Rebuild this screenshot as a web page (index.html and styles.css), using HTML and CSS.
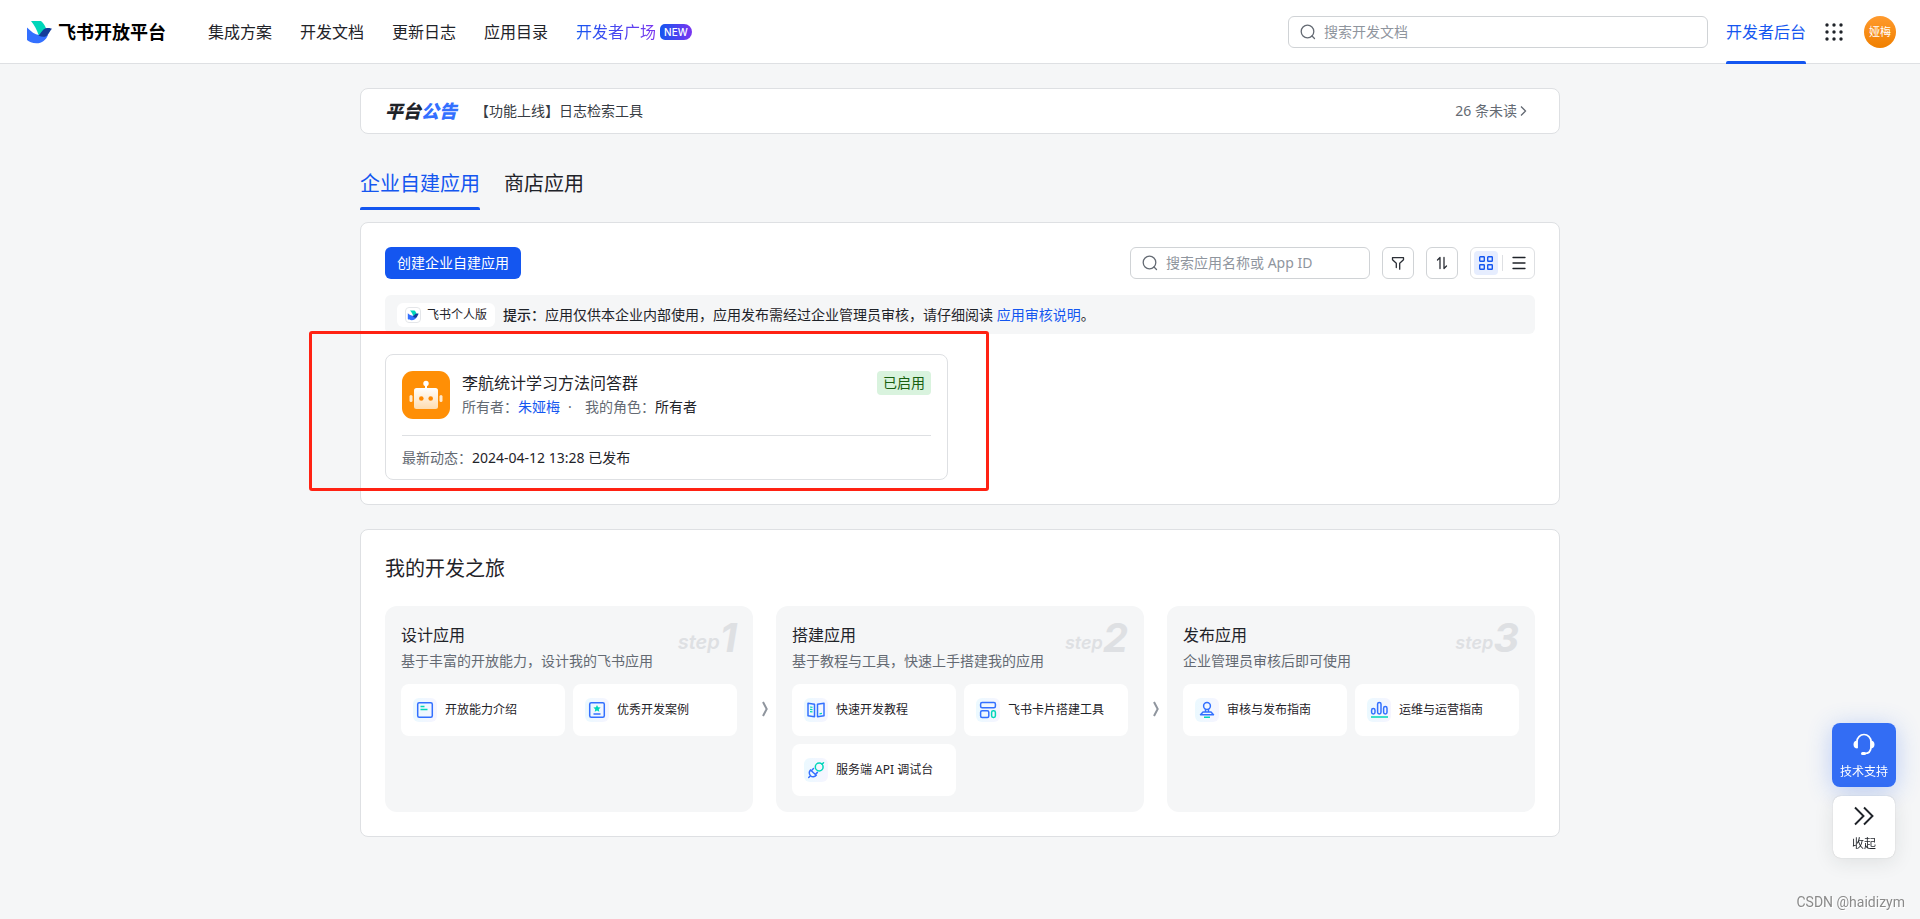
FILE: index.html
```html
<!DOCTYPE html>
<html lang="zh-CN">
<head>
<meta charset="utf-8">
<title>飞书开放平台</title>
<link rel="stylesheet" href="styles.css">
</head>
<body>
<header class="topbar">
  <a class="brand" href="#">
    <svg width="26" height="24" viewBox="0 0 26 24" aria-hidden="true">
      <path d="M5 1h10c2.600 2.200 4.300 5 5.200 8L13 16C11 10 8.400 5 5 1z" fill="#00d6b9"/>
      <path d="M1 7.500c4 4.200 8 7 12 7.500h9c-2 5-6 8.300-11.500 8.300C6 23.300 3.200 21.600 1 20z" fill="#3370ff"/>
      <path d="M12.500 15.500c3-2.500 4.300-7.200 8.500-7.500 1.600 0 3.200.1 5 .7-2.600 2.300-3 6-6 7.500-2.200 1-5 .5-7.500-.7z" fill="#133c9a"/>
    </svg>
    <span class="brand-name">飞书开放平台</span>
  </a>
  <nav class="nav">
    <a href="#">集成方案</a>
    <a href="#">开发文档</a>
    <a href="#">更新日志</a>
    <a href="#">应用目录</a>
    <a class="nav-hot" href="#"><span class="nav-hot-text">开发者广场</span><span class="badge-new">NEW</span></a>
  </nav>
  <div class="top-right">
    <label class="search search-docs">
      <svg width="16" height="16" viewBox="0 0 16 16" fill="none" stroke="#646a73" stroke-width="1.300" stroke-linecap="round" aria-hidden="true"><circle cx="7.500" cy="7.500" r="6.300"/><path d="M12 12l2.500 2.500"/></svg>
      <input type="text" placeholder="搜索开发文档" aria-label="搜索开发文档">
    </label>
    <a class="console-link" href="#">开发者后台</a>
    <button class="icon-plain" aria-label="应用列表">
      <svg width="18" height="18" viewBox="0 0 18 18" fill="#1f2329" aria-hidden="true"><circle cx="2" cy="2" r="1.700"/><circle cx="9" cy="2" r="1.700"/><circle cx="16" cy="2" r="1.700"/><circle cx="2" cy="9" r="1.700"/><circle cx="9" cy="9" r="1.700"/><circle cx="16" cy="9" r="1.700"/><circle cx="2" cy="16" r="1.700"/><circle cx="9" cy="16" r="1.700"/><circle cx="16" cy="16" r="1.700"/></svg>
    </button>
    <button class="avatar">娅梅</button>
  </div>
</header>

<main class="page">
  <section class="notice-bar">
    <h2 class="notice-title">平台<em>公告</em></h2>
    <a class="notice-text" href="#">【功能上线】日志检索工具</a>
    <a class="notice-more" href="#">26 条未读<svg width="12" height="12" viewBox="0 0 12 12" fill="none" stroke="#646a73" stroke-width="1.300" aria-hidden="true"><path d="M4 1.500L8.500 6 4 10.500"/></svg></a>
  </section>

  <nav class="tabs">
    <a class="tab tab-active" href="#">企业自建应用</a>
    <a class="tab" href="#">商店应用</a>
  </nav>

  <section class="panel apps">
    <div class="toolbar">
      <button class="btn-primary">创建企业自建应用</button>
      <div class="tools">
        <label class="search search-apps">
          <svg width="16" height="16" viewBox="0 0 16 16" fill="none" stroke="#646a73" stroke-width="1.300" stroke-linecap="round" aria-hidden="true"><circle cx="7.500" cy="7.500" r="6.300"/><path d="M12 12l2.500 2.500"/></svg>
          <input type="text" placeholder="搜索应用名称或 App ID" aria-label="搜索应用名称或 App ID">
        </label>
        <button class="tool" aria-label="筛选">
          <svg width="14" height="14" viewBox="0 0 14 14" fill="none" stroke="#2b2f36" stroke-width="1.300" stroke-linejoin="round" stroke-linecap="round" aria-hidden="true"><path d="M5.300 11.500V7.200L1.500 3.800V1.700h11v2.100L8.700 7.200v6"/></svg>
        </button>
        <button class="tool" aria-label="排序">
          <svg width="14" height="14" viewBox="0 0 14 14" fill="none" stroke="#2b2f36" stroke-width="1.300" stroke-linejoin="round" stroke-linecap="round" aria-hidden="true"><path d="M2.500 4l2.500-2.500v11M9 1.500v11l2.500-2.500"/></svg>
        </button>
        <div class="view-toggle">
          <button class="view view-on" aria-label="卡片视图">
            <svg width="14" height="14" viewBox="0 0 14 14" fill="none" stroke="#1456f0" stroke-width="1.400" aria-hidden="true"><rect x=".7" y=".7" width="4.600" height="4.600" rx=".6"/><rect x="8.700" y=".7" width="4.600" height="4.600" rx=".6"/><rect x=".7" y="8.700" width="4.600" height="4.600" rx=".6"/><rect x="8.700" y="8.700" width="4.600" height="4.600" rx=".6"/></svg>
          </button>
          <span class="view-sep"></span>
          <button class="view" aria-label="列表视图">
            <svg width="14" height="14" viewBox="0 0 14 14" stroke="#1f2329" stroke-width="1.300" stroke-linecap="round" aria-hidden="true"><path d="M1 1.500h12M1 7h12M1 12.500h12"/></svg>
          </button>
        </div>
      </div>
    </div>

    <div class="tip">
      <span class="tenant">
        <svg width="16" height="16" viewBox="0 0 16 16" aria-hidden="true"><rect x=".5" y=".5" width="15" height="15" rx="3.500" fill="#fff" stroke="#e4e6e9"/><path d="M5 3.500h4.500c1.200 1 1.800 2.300 2.100 3.500L8.500 9.500C7.700 7 6.600 5.200 5 3.500z" fill="#00d6b9"/><path d="M2.800 6.300c2.500 2.300 5 3 9.200 3-.8 2.500-3 3.900-5.400 3.900-1.500 0-2.900-.4-3.800-1.200z" fill="#3370ff"/><path d="M8 9.400c1.200-1 2-3 4-3 .7 0 1.200.1 1.700.4-1 .9-1.300 3.500-2.700 4-1 .2-2-.4-3-1.400z" fill="#133c9a"/></svg>
        飞书个人版
      </span>
      <p class="tip-text"><strong>提示：</strong>应用仅供本企业内部使用，应用发布需经过企业管理员审核，请仔细阅读 <a href="#">应用审核说明</a>。</p>
    </div>

    <div class="app-grid">
      <article class="app-card">
        <div class="app-head">
          <svg class="app-icon" width="48" height="48" viewBox="0 0 48 48" aria-hidden="true">
            <defs>
              <linearGradient id="bot" x1="0" y1="0" x2="0" y2="1"><stop offset="0" stop-color="#fff"/><stop offset="1" stop-color="#ffdcae"/></linearGradient>
            </defs>
            <rect width="48" height="48" rx="11" fill="#ff8f06"/>
            <circle cx="24" cy="12.500" r="2.700" fill="#fff"/><path d="M23 13h2v6h-2z" fill="#fff"/>
            <rect x="12" y="17" width="24" height="21" rx="2.500" fill="url(#bot)"/>
            <rect x="7.500" y="24" width="3" height="7" rx="1.500" fill="#ffe9cd"/><rect x="37.500" y="24" width="3" height="7" rx="1.500" fill="#ffe9cd"/>
            <circle cx="19.300" cy="27.500" r="2.300" fill="#ff8800"/><circle cx="28.700" cy="27.500" r="2.300" fill="#ff8800"/>
          </svg>
          <div class="app-info">
            <h3 class="app-name">李航统计学习方法问答群</h3>
            <p class="app-meta"><span>所有者：<a href="#">朱娅梅</a></span><span class="dot">·</span><span>我的角色：<b>所有者</b></span></p>
          </div>
          <span class="status">已启用</span>
        </div>
        <p class="app-foot">最新动态：<b>2024-04-12 13:28 已发布</b></p>
      </article>
    </div>
    <div class="highlight"></div>
  </section>

  <section class="panel journey">
    <h2 class="journey-title">我的开发之旅</h2>
    <div class="steps">
      <div class="step">
        <div class="step-no step-no-first">step<b>1</b></div>
        <h3>设计应用</h3>
        <p>基于丰富的开放能力，设计我的飞书应用</p>
        <div class="tiles">
          <a class="tile" href="#"><svg class="tile-icon" viewBox="0 0 24 24" fill="none" stroke="#3370ff" stroke-width="1.500" aria-hidden="true"><rect x="4.700" y="4.700" width="14.600" height="14.600" rx="1.500"/><path d="M7.500 8.500h4M7.500 11.500h7" stroke="#00d6b9"/></svg>开放能力介绍</a>
          <a class="tile" href="#"><svg class="tile-icon" viewBox="0 0 24 24" fill="none" stroke="#3370ff" stroke-width="1.500" aria-hidden="true"><rect x="4.700" y="4.700" width="14.600" height="14.600" rx="1.500"/><path d="M8.500 16h7"/><path d="M12 6.900l1.100 2.300 2.500.3-1.800 1.700.5 2.500-2.300-1.200-2.300 1.200.5-2.500-1.800-1.700 2.500-.3z" fill="#00d6b9" stroke="none"/></svg>优秀开发案例</a>
        </div>
      </div>
      <svg class="step-arrow" viewBox="0 0 8 16" aria-hidden="true"><path d="M2 1l3.700 7L2 15" fill="none" stroke="#8f959e" stroke-width="2"/></svg>
      <div class="step">
        <div class="step-no">step<b>2</b></div>
        <h3>搭建应用</h3>
        <p>基于教程与工具，快速上手搭建我的应用</p>
        <div class="tiles">
          <a class="tile" href="#"><svg class="tile-icon" viewBox="0 0 24 24" fill="none" stroke="#3370ff" stroke-width="1.500" stroke-linejoin="round" aria-hidden="true"><path d="M4 5.200l6.500 1v12.600L4 17.800zM20 5.200l-6.500 1v12.600l6.500-1z"/><path d="M6 9l2.500.4M6 11.300l2.500.3M6 13.600l2.500.3M15.500 15.800l2.500-.4" stroke="#00d6b9" stroke-width="1.200"/></svg>快速开发教程</a>
          <a class="tile" href="#"><svg class="tile-icon" viewBox="0 0 24 24" fill="none" stroke="#3370ff" stroke-width="1.500" aria-hidden="true"><rect x="4.600" y="4.600" width="14.800" height="5.200" rx="1.500"/><rect x="4.600" y="12.800" width="8.200" height="6.600" rx="1.500"/><rect x="15.600" y="12.800" width="3.800" height="6.600" rx="1.700" stroke="#00d6b9"/></svg>飞书卡片搭建工具</a>
          <a class="tile" href="#"><svg class="tile-icon" viewBox="0 0 24 24" fill="none" stroke="#3370ff" stroke-width="1.500" stroke-linecap="round" aria-hidden="true"><path d="M6.500 12a3.900 3.900 0 1 0 5.700 5.300zM6 18.200l-1.300 1.300M8.300 11.700l1.200-1.200M12.200 15.600l1.200-1.200"/><circle cx="15.200" cy="9" r="3.900" stroke="#00d6b9"/><path d="M18 6.200l1.500-1.500" stroke="#00d6b9"/></svg>服务端 API 调试台</a>
        </div>
      </div>
      <svg class="step-arrow" viewBox="0 0 8 16" aria-hidden="true"><path d="M2 1l3.700 7L2 15" fill="none" stroke="#8f959e" stroke-width="2"/></svg>
      <div class="step">
        <div class="step-no">step<b>3</b></div>
        <h3>发布应用</h3>
        <p>企业管理员审核后即可使用</p>
        <div class="tiles">
          <a class="tile" href="#"><svg class="tile-icon" viewBox="0 0 24 24" fill="none" stroke="#3370ff" stroke-width="1.500" stroke-linejoin="round" aria-hidden="true"><circle cx="12" cy="8" r="3.400"/><path d="M10.500 11.300v2.200M13.500 11.300v2.200M8 14h8l2.500 2.700h-13z"/><path d="M9 19.200h6" stroke="#00d6b9" stroke-width="1.600"/></svg>审核与发布指南</a>
          <a class="tile" href="#"><svg class="tile-icon" viewBox="0 0 24 24" fill="none" stroke="#3370ff" stroke-width="1.500" aria-hidden="true"><rect x="4.600" y="10.600" width="3.400" height="5.400" rx="1.700"/><rect x="10.600" y="4.400" width="3.400" height="11.600" rx="1.700"/><rect x="16.600" y="8.600" width="3.400" height="7.400" rx="1.700"/><path d="M4 19h17" stroke="#00d6b9" stroke-width="1.600"/></svg>运维与运营指南</a>
        </div>
      </div>
    </div>
  </section>
</main>

<aside class="float">
  <button class="float-btn float-support">
    <svg width="24" height="24" viewBox="0 0 24 24" fill="none" stroke="#fff" stroke-width="1.700" aria-hidden="true"><path d="M5 16V9.500a7 7 0 0 1 14 0V15c0 4-2.500 6.500-6.500 6.500"/><path d="M5.500 8.500v8C3 16.500 1.500 15 1.500 12.500s1.500-4 4-4zM18.500 8.500v8c2.500 0 4-1.500 4-4s-1.500-4-4-4z" fill="#fff" stroke="none"/><rect x="9" y="20" width="5" height="3" rx="1.500" fill="#fff" stroke="none"/></svg>
    技术支持
  </button>
  <button class="float-btn float-fold">
    <svg width="24" height="24" viewBox="0 0 24 24" fill="none" stroke="#1f2329" stroke-width="1.900" aria-hidden="true"><path d="M3 3.500l8.500 8.500L3 20.500M12 3.500l8.500 8.500-8.500 8.500"/></svg>
    收起
  </button>
</aside>
<div class="watermark">CSDN @haidizym</div>
</body>
</html>
```

FILE: styles.css
```css
* { box-sizing: border-box; }

body {
  margin: 0;
  min-height: 100vh;
  background: #f5f6f7;
  color: #1f2329;
  font: 14px/22px "Noto Sans", "Noto Sans CJK SC", sans-serif;
}

h2, h3, p { margin: 0; font-weight: 400; }
a { color: inherit; text-decoration: none; }
button { font: inherit; color: inherit; border: 0; padding: 0; background: none; cursor: pointer; }
svg { display: block; flex: none; }
b { font-weight: 400; }

/* Header */
.topbar {
  display: flex;
  align-items: center;
  height: 64px;
  padding: 0 24px 0 26px;
  background: #fff;
  border-bottom: 1px solid #dee0e3;
}
.brand { display: flex; align-items: center; gap: 6px; margin-right: 42px; }
.brand-name { font-size: 18px; font-weight: 700; color: #000; white-space: nowrap; }
.nav { display: flex; gap: 28px; font-size: 16px; white-space: nowrap; }
.nav-hot { display: flex; align-items: center; gap: 4px; }
.nav-hot-text {
  background: linear-gradient(90deg, #1456f0, #7a35f0);
  background-clip: text;
  color: transparent;
}
.badge-new {
  padding: 0 4px;
  border-radius: 5px 8px 8px 5px;
  background: linear-gradient(90deg, #1456f0, #7a35f0);
  color: #fff;
  font: 500 10px/16px Inter, sans-serif;
}
.top-right { display: flex; align-items: center; flex: 1; justify-content: flex-end; align-self: stretch; }
.search {
  display: flex;
  align-items: center;
  gap: 8px;
  height: 32px;
  padding: 0 11px;
  background: #fff;
  border: 1px solid #d0d3d6;
  border-radius: 6px;
}
.search input {
  flex: 1;
  min-width: 0;
  padding: 0;
  border: 0;
  outline: 0;
  background: none;
  font: inherit;
  color: #1f2329;
}
.search input::placeholder { color: #8f959e; opacity: 1; }
.search-docs { width: 420px; margin-right: 18px; }
.console-link {
  display: flex;
  align-items: center;
  align-self: stretch;
  position: relative;
  margin-right: 19px;
  font-size: 16px;
  color: #1456f0;
  white-space: nowrap;
}
.console-link::after {
  content: "";
  position: absolute;
  left: 0;
  right: 0;
  bottom: -1px;
  height: 3px;
  border-radius: 2px 2px 0 0;
  background: #1456f0;
}
.icon-plain { margin-right: 21px; }
.avatar {
  width: 32px;
  height: 32px;
  border-radius: 50%;
  background: linear-gradient(#ff9a2e, #f08000);
  color: #fff;
  font-size: 11px;
}

/* Page column */
.page { max-width: 1200px; margin: 0 auto; padding: 24px 0; }
.notice-bar {
  display: flex;
  align-items: center;
  height: 46px;
  padding: 0 30px 0 24px;
  background: #fff;
  border: 1px solid #dee0e3;
  border-radius: 8px;
}
.notice-title { font-size: 18px; font-weight: 900; font-style: italic; }
.notice-title em { color: #3370ff; }
.notice-text { margin-left: 18px; color: #373c43; }
.notice-more { display: flex; align-items: center; margin-left: auto; color: #646a73; }

.tabs { display: flex; gap: 24px; margin-top: 36px; }
.tab { padding-bottom: 12px; font-size: 20px; line-height: 28px; }
.tab-active { position: relative; color: #1456f0; }
.tab-active::after {
  content: "";
  position: absolute;
  left: 0;
  right: 0;
  bottom: 0;
  height: 3px;
  border-radius: 2px 2px 0 0;
  background: #1456f0;
}

.panel { padding: 24px; background: #fff; border: 1px solid #dee0e3; border-radius: 8px; }
.apps { position: relative; margin-top: 12px; }
.toolbar { display: flex; justify-content: space-between; }
.btn-primary { height: 32px; padding: 0 12px; border-radius: 6px; background: #1456f0; color: #fff; }
.tools { display: flex; gap: 12px; }
.search-apps { width: 240px; }
.tool {
  display: grid;
  place-items: center;
  width: 32px;
  height: 32px;
  border: 1px solid #d0d3d6;
  border-radius: 6px;
}
.view-toggle {
  display: flex;
  align-items: center;
  gap: 4px;
  padding: 0 3px;
  border: 1px solid #dee0e3;
  border-radius: 6px;
}
.view { display: grid; place-items: center; width: 24px; height: 24px; border-radius: 4px; }
.view-on { background: #e6edfe; }
.view-sep { width: 1px; height: 16px; background: #dee0e3; }

.tip {
  display: flex;
  align-items: center;
  gap: 8px;
  margin-top: 16px;
  padding: 8px 12px 7px;
  background: #f5f6f7;
  border-radius: 6px;
}
.tenant {
  display: flex;
  align-items: center;
  gap: 6px;
  height: 24px;
  padding: 0 8px;
  background: #fff;
  border-radius: 6px;
  font-size: 12px;
}
.tip strong { font-weight: 500; }
.tip a, .app-meta a { color: #1456f0; }

.app-grid { display: grid; grid-template-columns: 1fr 1fr; gap: 24px; margin-top: 20px; }
.app-card { padding: 16px 16px 10px; border: 1px solid #dee0e3; border-radius: 8px; }
.app-head { display: flex; gap: 12px; padding-bottom: 16px; border-bottom: 1px solid #dee0e3; }
.app-info { flex: 1; }
.app-name { font-size: 16px; line-height: 24px; }
.app-meta { display: flex; line-height: 24px; color: #646a73; }
.app-meta b, .app-foot b { color: #1f2329; }
.dot { width: 25px; padding-left: 8px; }
.status {
  height: 24px;
  padding: 0 6px;
  border-radius: 4px;
  background: #d9f3de;
  color: #186010;
  line-height: 24px;
}
.app-foot { padding-top: 11px; line-height: 22px; color: #646a73; }

/* Rectangular marker over the app card, extending past the panel edge */
.highlight {
  position: absolute;
  left: -52px;
  top: 108px;
  width: 680px;
  height: 160px;
  border: 3px solid #ff2213;
  border-radius: 3px;
  pointer-events: none;
}

/* Journey */
.journey { margin-top: 24px; }
.journey-title { font-size: 20px; line-height: 30px; }
.steps { display: flex; align-items: stretch; margin-top: 22px; }
.step { position: relative; flex: 1; padding: 16px; background: #f5f6f7; border-radius: 12px; }
.step h3 { font-size: 16px; line-height: 26px; }
.step p { margin-top: 2px; line-height: 22px; color: #646a73; }
.step-no {
  position: absolute;
  top: 12px;
  right: 16px;
  color: #dee0e3;
  font: italic 600 18px/40px Inter, sans-serif;
}
.step-no b { font-size: 40px; font-weight: 700; vertical-align: -3px; }
.step-no-first { font-size: 20px; }
.tiles { display: grid; grid-template-columns: 1fr 1fr; gap: 8px; margin-top: 12px; }
.tile {
  display: flex;
  align-items: center;
  gap: 8px;
  height: 52px;
  padding: 0 12px;
  background: #fff;
  border-radius: 8px;
  font-size: 12px;
  white-space: nowrap;
}
.tile-icon {
  width: 24px;
  height: 24px;
  border-radius: 6px;
  background: linear-gradient(90deg, #ebf9ff, #f6f5ff);
}
.step-arrow { width: 8px; height: 16px; margin: 0 7px 0 8px; align-self: center; }

/* Floating actions */
.float {
  position: fixed;
  right: 24px;
  bottom: 61px;
  display: flex;
  flex-direction: column;
  align-items: center;
  gap: 9px;
}
.float-btn {
  display: flex;
  flex-direction: column;
  align-items: center;
  border-radius: 8px;
  font-size: 12px;
  line-height: 20px;
}
.float-support {
  width: 64px;
  height: 64px;
  padding-top: 9px;
  gap: 6px;
  background: #336df4;
  color: #fff;
  box-shadow: 0 4px 24px rgba(51, 109, 244, .3);
}
.float-fold {
  width: 62px;
  height: 62px;
  padding-top: 8px;
  gap: 6px;
  background: #fff;
  box-shadow: 0 4px 20px rgba(31, 35, 41, .1), 0 0 1px rgba(31, 35, 41, .3);
}
.watermark {
  position: fixed;
  right: 15px;
  bottom: 8px;
  color: #8a8a8a;
  font: 14px/18px Roboto, sans-serif;
  text-shadow: 1px 1px 0 #fff;
}
```
